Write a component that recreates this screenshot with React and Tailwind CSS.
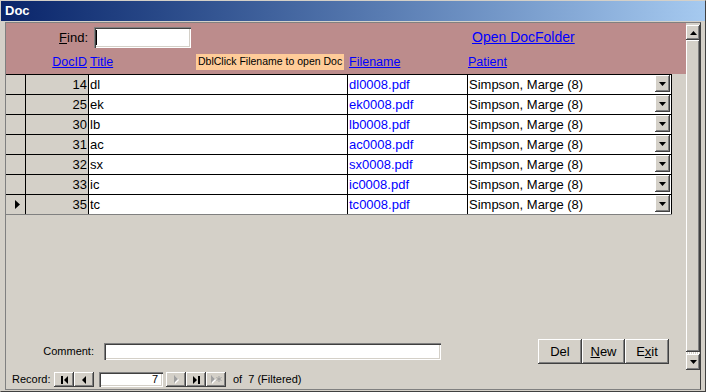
import React from 'react';

const raised = 'bg-[#d4d0c8] shadow-[inset_-1px_-1px_#404040,inset_1px_1px_#ffffff,inset_-2px_-2px_#808080,inset_2px_2px_#d4d0c8]';
const sunken = 'bg-white shadow-[inset_1px_1px_#808080,inset_2px_2px_#404040,inset_-1px_-1px_#ffffff,inset_-2px_-2px_#d4d0c8]';

const docs = [
  { id: 14, title: 'dl' },
  { id: 25, title: 'ek' },
  { id: 30, title: 'lb' },
  { id: 31, title: 'ac' },
  { id: 32, title: 'sx' },
  { id: 33, title: 'ic' },
  { id: 35, title: 'tc' },
];

const DownArrow = () => (
  <svg width="7" height="4" viewBox="0 0 7 4">
    <polygon points="0,0 7,0 3.5,4" fill="#000" />
  </svg>
);

const DocRow = ({ doc, current }) => (
  <div className="flex h-[20px] text-[13px]">
    <div className="w-[20px] border-t border-r border-black bg-[#d4d0c8] flex items-center justify-center">
      {current && (
        <svg width="5" height="9" viewBox="0 0 5 9" className="ml-[3px]">
          <polygon points="0,0 5,4.5 0,9" fill="#000" />
        </svg>
      )}
    </div>
    <div className="w-[62px] border-t border-black bg-[#d4d0c8] flex items-center justify-end pr-[1px]">{doc.id}</div>
    <div className="w-[259px] border-t border-l border-black bg-white flex items-center pl-[1px]">{doc.title}</div>
    <div className="w-[120px] border-t border-l border-black bg-white flex items-center pl-[1px] text-[#0000ff]">{doc.title}0008.pdf</div>
    <div className="w-[205px] border-t border-l border-r border-black bg-white flex">
      <span className="flex-1 flex items-center pl-[1px]">Simpson, Marge (8)</span>
      <div className={`w-[15px] h-[17px] mr-[1px] flex items-center justify-center ${raised}`}>
        <DownArrow />
      </div>
    </div>
  </div>
);

const NavButton = ({ children }) => (
  <div className={`w-[20px] h-[15px] flex items-center justify-center ${raised}`}>{children}</div>
);

const App = () => {
  return (
    <div className="w-[706px] h-[392px] bg-[#d4d0c8] flex flex-col border border-t-[#d4d0c8] border-l-[#d4d0c8] border-r-[#404040] border-b-[#404040] font-['Liberation_Sans',Arial,sans-serif] text-black overflow-hidden">
      {/* title bar */}
      <div className="h-[20px] shrink-0 bg-gradient-to-r from-[#0a246a] to-[#a6caf0] flex items-center pl-[4px] text-white font-bold text-[13px]">
        Doc
      </div>

      <div className="flex-1 flex flex-col px-[4px] pt-[1px] pb-[1px]">
        <div className="flex-1 flex flex-col border border-l-[#808080] border-t-[#808080] border-r-[#404040] border-b-[#808080]">
          <div className="flex flex-1">
            {/* form body */}
            <div className="w-[680px] flex flex-col">
              {/* header */}
              <div className="h-[51px] bg-[#bc8c8c] flex flex-col">
                <div className="flex items-start pt-[4px] h-[25px]">
                  <div className="w-[84px] h-[21px] flex items-center justify-end text-[13px] pr-[2px]">
                    <span><span className="underline">F</span>ind:</span>
                  </div>
                  <div className={`ml-[4px] w-[97px] h-[21px] flex items-center pl-[2px] ${sunken}`}>
                    <div className="w-[1px] h-[15px] bg-black" />
                  </div>
                  <a className="ml-[281px] mt-[2px] text-[14px] leading-[16px] text-[#0000ff] underline cursor-pointer">Open DocFolder</a>
                </div>
                <div className="flex items-center mt-[6px] h-[16px] text-[12.5px] text-[#0000ff]">
                  <div className="w-[82px] text-right pr-[1px] underline">DocID</div>
                  <div className="w-[108px] pl-[2px] underline">Title</div>
                  <div className="w-[148px] h-[16px] bg-[#ffcc99] text-black text-[10.5px] flex items-center pl-[2px] whitespace-nowrap">
                    DblClick Filename to open Doc
                  </div>
                  <div className="w-[123px] pl-[5px] underline">Filename</div>
                  <div className="pl-[1px] underline">Patient</div>
                </div>
              </div>

              {/* datasheet rows */}
              <div className="flex flex-col border-b border-[#808080] w-[666px]">
                {docs.map((d, i) => (
                  <DocRow key={d.id} doc={d} current={i === docs.length - 1} />
                ))}
              </div>

              <div className="flex-1" />

              {/* comment + buttons */}
              <div className="flex items-center h-[25px] mb-[6px]">
                <div className="w-[88px] text-right text-[11px]">Comment:</div>
                <div className={`ml-[10px] w-[337px] h-[17px] ${sunken}`} />
                <div className="ml-[97px] flex text-[13px]">
                  <div className={`w-[44px] h-[25px] flex items-center justify-center ${raised}`}>Del</div>
                  <div className={`w-[43px] h-[25px] flex items-center justify-center ${raised}`}>
                    <span><span className="underline">N</span>ew</span>
                  </div>
                  <div className={`w-[44px] h-[25px] flex items-center justify-center ${raised}`}>
                    <span>E<span className="underline">x</span>it</span>
                  </div>
                </div>
              </div>
            </div>

            {/* scrollbar */}
            <div className="w-[14px] flex flex-col pt-[2px]">
              <div className={`h-[15px] flex items-center justify-center ${raised}`}>
                <svg width="7" height="4" viewBox="0 0 7 4">
                  <polygon points="3.5,0 7,4 0,4" fill="#000" />
                </svg>
              </div>
              <div className={`flex-1 ${raised}`} />
              <div className="h-[2px] bg-[repeating-linear-gradient(90deg,#ffffff_0px,#ffffff_1px,#d4d0c8_1px,#d4d0c8_2px)]" />
              <div className={`h-[16px] flex items-center justify-center ${raised}`}>
                <DownArrow />
              </div>
            </div>
          </div>

          {/* record navigator */}
          <div className="h-[19px] flex items-center pl-[6px] text-[11px]">
            <span className="w-[42px]">Record:</span>
            <NavButton>
              <svg width="7" height="8" viewBox="0 0 7 8">
                <rect x="0" y="0" width="2" height="8" fill="#000" />
                <polygon points="7,0 7,8 3,4" fill="#000" />
              </svg>
            </NavButton>
            <NavButton>
              <svg width="4" height="8" viewBox="0 0 4 8">
                <polygon points="4,0 4,8 0,4" fill="#000" />
              </svg>
            </NavButton>
            <div className={`ml-[5px] w-[64px] h-[15px] flex items-center justify-end pr-[5px] ${sunken}`}>7</div>
            <div className="ml-[3px] flex">
              <NavButton>
                <svg width="5" height="9" viewBox="0 0 5 9">
                  <polygon points="1,1 5,5 1,9" fill="#ffffff" />
                  <polygon points="0,0 4,4 0,8" fill="#a0a0a0" />
                </svg>
              </NavButton>
              <NavButton>
                <svg width="7" height="8" viewBox="0 0 7 8">
                  <polygon points="0,0 0,8 4,4" fill="#000" />
                  <rect x="5" y="0" width="2" height="8" fill="#000" />
                </svg>
              </NavButton>
              <NavButton>
                <svg width="11" height="9" viewBox="0 0 11 9">
                  <polygon points="1,1 5,5 1,9" fill="#ffffff" />
                  <polygon points="0,0 4,4 0,8" fill="#a0a0a0" />
                  <path d="M8 1v6M5.5 2.5l5 3M10.5 2.5l-5 3" stroke="#a0a0a0" strokeWidth="1" />
                </svg>
              </NavButton>
            </div>
            <span className="ml-[7px] whitespace-pre">of  7 (Filtered)</span>
          </div>
        </div>
      </div>
    </div>
  );
};

export default App;
